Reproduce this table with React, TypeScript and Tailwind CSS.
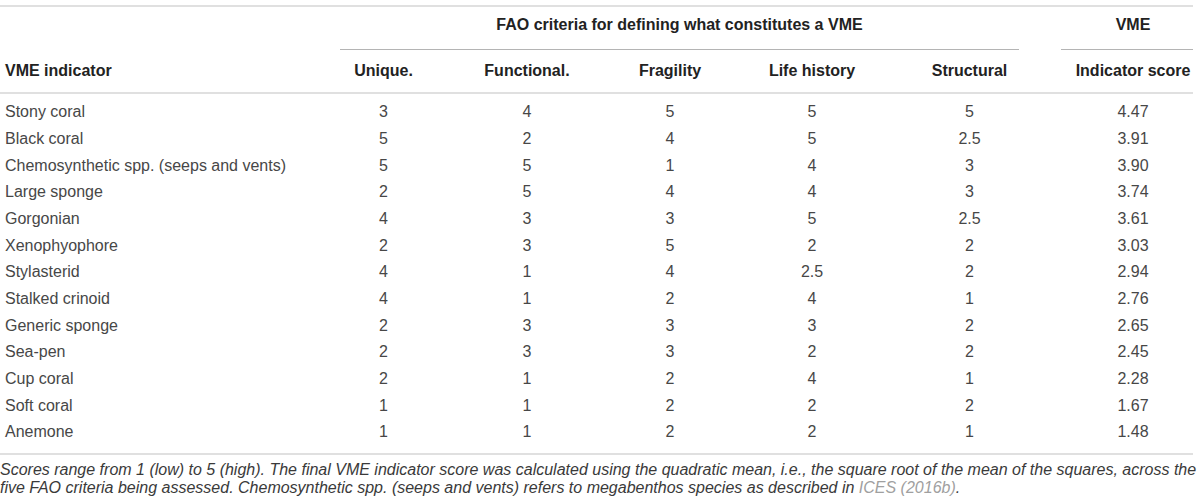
const rows: [string, string, string, string, string, string, string][] = [
  ['Stony coral', '3', '4', '5', '5', '5', '4.47'],
  ['Black coral', '5', '2', '4', '5', '2.5', '3.91'],
  ['Chemosynthetic spp. (seeps and vents)', '5', '5', '1', '4', '3', '3.90'],
  ['Large sponge', '2', '5', '4', '4', '3', '3.74'],
  ['Gorgonian', '4', '3', '3', '5', '2.5', '3.61'],
  ['Xenophyophore', '2', '3', '5', '2', '2', '3.03'],
  ['Stylasterid', '4', '1', '4', '2.5', '2', '2.94'],
  ['Stalked crinoid', '4', '1', '2', '4', '1', '2.76'],
  ['Generic sponge', '2', '3', '3', '3', '2', '2.65'],
  ['Sea-pen', '2', '3', '3', '2', '2', '2.45'],
  ['Cup coral', '2', '1', '2', '4', '1', '2.28'],
  ['Soft coral', '1', '1', '2', '2', '2', '1.67'],
  ['Anemone', '1', '1', '2', '2', '1', '1.48'],
]

// column template shared by every row so the centres line up
const cols = 'grid grid-cols-[312px_143px_144px_142px_148px_161px_143px]'

export default function App() {
  return (
    <div className="w-[1200px] h-[504px] bg-white font-['Liberation_Sans',Arial,sans-serif] text-[16px] leading-[18px]">
      <div className="w-[1193px] pt-[5px]">
        {/* Header */}
        <div className="border-t-2 border-[#e0e0e0]">
          <div className={`${cols} h-[43px] font-bold text-[#222]`}>
            <div />
            <div className="col-span-5 ml-[28px] mr-[31px] border-b border-[#b4b4b4] pt-[9px] text-center">
              FAO criteria for defining what constitutes a VME
            </div>
            <div className="ml-[11px] border-b border-[#b4b4b4] pt-[9px] pl-[12px] text-center">VME</div>
          </div>
          <div className={`${cols} h-[44px] items-center border-b-2 border-[#e0e0e0] font-bold text-[#222]`}>
            <div className="pl-[5px]">VME indicator</div>
            <div className="text-center">Unique.</div>
            <div className="text-center">Functional.</div>
            <div className="text-center">Fragility</div>
            <div className="text-center pr-[6px]">Life history</div>
            <div className="text-center">Structural</div>
            <div className="text-center pl-[23px] whitespace-nowrap">Indicator score</div>
          </div>
        </div>

        {/* Body */}
        <div className="pt-[5px] pb-[7px] border-b-2 border-[#e0e0e0] text-[#474747]">
          {rows.map((r) => (
            <div key={r[0]} className={`${cols} h-[26.67px] items-center`}>
              <div className="pl-[5px] whitespace-nowrap">{r[0]}</div>
              <div className="text-center">{r[1]}</div>
              <div className="text-center">{r[2]}</div>
              <div className="text-center">{r[3]}</div>
              <div className="text-center pr-[6px]">{r[4]}</div>
              <div className="text-center">{r[5]}</div>
              <div className="text-center pl-[23px]">{r[6]}</div>
            </div>
          ))}
        </div>

        {/* Footnote */}
        <div className="pt-[6px] italic text-[#3a3a3a]">
          <span className="block whitespace-nowrap">
            Scores range from 1 (low) to 5 (high). The final VME indicator score was calculated using the quadratic mean, i.e., the square root of the mean of the squares, across the
          </span>
          <span className="block whitespace-nowrap">
            five FAO criteria being assessed. Chemosynthetic spp. (seeps and vents) refers to megabenthos species as described in{' '}
            <a className="text-[#a0a0a0]">ICES (2016b)</a>.
          </span>
        </div>
      </div>
    </div>
  )
}
